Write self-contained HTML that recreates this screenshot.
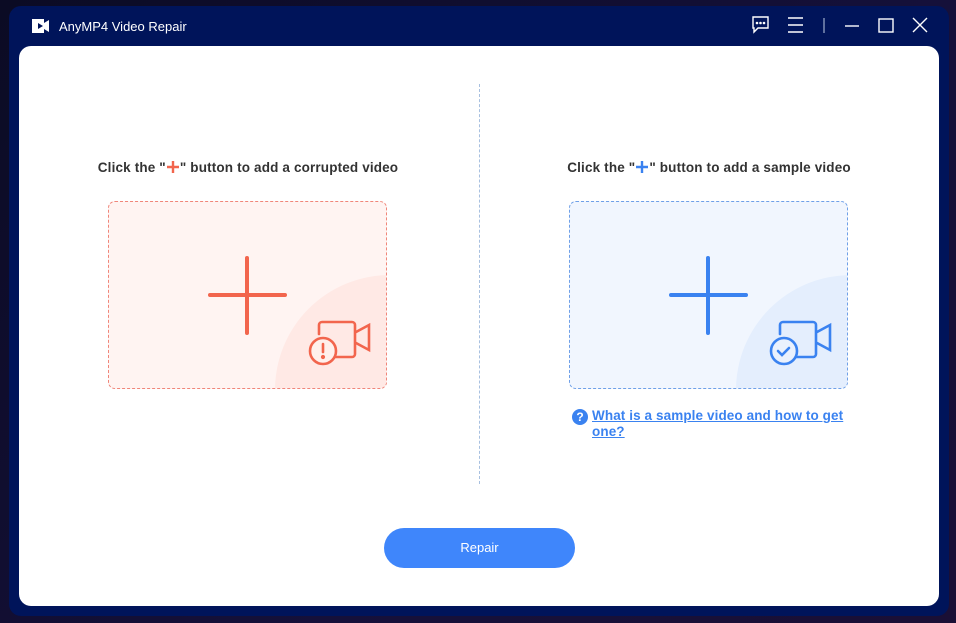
<!DOCTYPE html>
<html><head><meta charset="utf-8"><style>
*{margin:0;padding:0;box-sizing:border-box}
body{width:956px;height:623px;overflow:hidden;background:linear-gradient(135deg,#0b0b24,#15103a 60%,#1a0f35);font-family:"Liberation Sans",sans-serif;position:relative}
.win{position:absolute;left:9px;top:6px;width:940px;height:610px;background:#00145a;border-radius:12px}
.title{position:absolute;left:59px;top:19px;color:#fff;font-size:13px}
.panel{position:absolute;left:19px;top:46px;width:920px;height:560px;background:#fff;border-radius:12px}
.divider{position:absolute;left:479px;top:84px;height:400px;border-left:1px dashed #a8c0e0}
.cap{position:absolute;top:160px;font-size:13.5px;line-height:16px;letter-spacing:0.15px;font-weight:bold;color:#333;text-align:center;white-space:nowrap}
.cap svg{vertical-align:-1px;margin:0 1px}
.box{position:absolute;top:201px;width:279px;height:188px;border-radius:7px;overflow:hidden}
.box .q{position:absolute;left:166px;top:73px;width:230px;height:230px;border-radius:50%}
.btn{position:absolute;left:384px;top:528px;width:191px;height:40px;border-radius:20px;background:#3f86fb;color:#fff;font-size:13px;text-align:center;line-height:40px}
.link{position:absolute;left:592px;top:408px;font-size:13.5px;letter-spacing:0.1px;font-weight:bold;color:#3a82f0;text-decoration:underline;line-height:16px;width:270px}
.qi{position:absolute;left:572px;top:409px;width:16px;height:16px;border-radius:50%;background:#3a82f0;color:#fff;font-size:12px;font-weight:bold;text-align:center;line-height:16px}
</style></head><body>
<div class="win"></div>
<svg style="position:absolute;left:30px;top:16px" width="22" height="20" viewBox="0 0 22 20"><path d="M2 3h12v4l5-3v12l-5-3v4H2z" fill="#fff"/><path d="M8 7l5 3-5 3z" fill="#00145a"/></svg>
<div class="title">AnyMP4 Video Repair</div>
<svg style="position:absolute;left:750px;top:14px" width="190" height="24" viewBox="0 0 190 24" fill="none" stroke="#fff" stroke-width="1.4">
<path d="M3 3h15v11H8l-4 4v-4H3z"/><circle cx="7" cy="9" r=".6" fill="#fff"/><circle cx="10.5" cy="9" r=".6" fill="#fff"/><circle cx="14" cy="9" r=".6" fill="#fff"/>
<path d="M38 4h15M38 11h15M38 18h15"/><path d="M74 4v15" stroke="#8899bb"/><path d="M95 12h14"/><rect x="129" y="5" width="14" height="13"/><path d="M163 4l14 14M177 4l-14 14"/></svg>
<div class="panel"></div>
<div class="divider"></div>
<div class="cap" style="left:88px;width:320px">Click the "<svg width="12" height="12"><path d="M6 0v12M0 6h12" stroke="#f2654d" stroke-width="2.4"/></svg>" button to add a corrupted video</div>
<div class="cap" style="left:549px;width:320px">Click the "<svg width="12" height="12"><path d="M6 0v12M0 6h12" stroke="#3a82f0" stroke-width="2.4"/></svg>" button to add a sample video</div>
<div class="box" style="left:108px;background:#fff4f2;border:1px dashed #f0867a"><div class="q" style="background:#ffe9e5"></div>
<svg style="position:absolute;left:0;top:0" width="279" height="188" fill="none" stroke="#f2654d" stroke-linecap="round" stroke-width="4"><path d="M138 56v75M101 93h75"/>
<g stroke-width="2.6"><path d="M210 132v-9a3 3 0 013-3h30a3 3 0 013 3v29a3 3 0 01-3 3h-20"/><path d="M247 130l13-7v25l-13-7"/><circle cx="214" cy="149" r="13" fill="#fff0ec"/><path d="M214 142v8"/><circle cx="214" cy="155" r=".8" fill="#f2654d"/></g></svg></div>
<div class="box" style="left:569px;background:#f1f6fe;border:1px dashed #6fa0e8"><div class="q" style="background:#e4eefd"></div>
<svg style="position:absolute;left:0;top:0" width="279" height="188" fill="none" stroke="#3a82f0" stroke-linecap="round" stroke-width="4"><path d="M138 56v75M101 93h75"/>
<g stroke-width="2.6"><path d="M210 132v-9a3 3 0 013-3h30a3 3 0 013 3v29a3 3 0 01-3 3h-20"/><path d="M247 130l13-7v25l-13-7"/><circle cx="214" cy="149" r="13" fill="#eaf1fd"/><path d="M208 149l4 4 7-7"/></g></svg></div>
<div class="qi">?</div>
<div class="link">What is a sample video and how to get one?</div>
<div class="btn">Repair</div>
</body></html>
